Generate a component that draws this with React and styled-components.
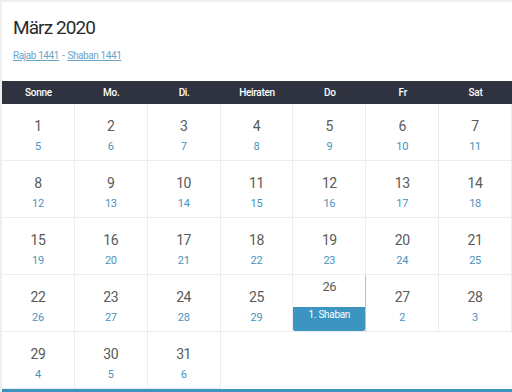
import React from "react";
import styled, { createGlobalStyle } from "styled-components";

const GlobalStyle = createGlobalStyle`
  html, body {
    margin: 0;
    padding: 0;
    background: #ffffff;
    font-family: Roboto, "Liberation Sans", Arial, sans-serif;
  }
`;

const weekdays = ["Sonne", "Mo.", "Di.", "Heiraten", "Do", "Fr", "Sat"];

// gregorian day, hijri day, optional month label
const days = [
  [1, 5], [2, 6], [3, 7], [4, 8], [5, 9], [6, 10], [7, 11],
  [8, 12], [9, 13], [10, 14], [11, 15], [12, 16], [13, 17], [14, 18],
  [15, 19], [16, 20], [17, 21], [18, 22], [19, 23], [20, 24], [21, 25],
  [22, 26], [23, 27], [24, 28], [25, 29], [26, 1, "1. Shaban"], [27, 2], [28, 3],
  [29, 4], [30, 5], [31, 6],
];

function App() {
  return (
    <>
      <GlobalStyle />
      <Page>
        <Sheet>
          <Title>März 2020</Title>
          <Months>
            <MonthLink href="#">Rajab 1441</MonthLink>
            <Dash>-</Dash>
            <MonthLink href="#">Shaban 1441</MonthLink>
          </Months>
          <HeadRow>
            {weekdays.map((d) => (
              <HeadCell key={d}>{d}</HeadCell>
            ))}
          </HeadRow>
          <Grid>
            {days.map(([g, h, label]) =>
              label ? (
                <MarkedCell key={g}>
                  <MarkedDay>{g}</MarkedDay>
                  <MonthBand>{label}</MonthBand>
                </MarkedCell>
              ) : (
                <Cell key={g}>
                  <Day>{g}</Day>
                  <Hijri>{h}</Hijri>
                </Cell>
              )
            )}
          </Grid>
          <BottomBar />
        </Sheet>
      </Page>
    </>
  );
}

const Page = styled.div`
  background: #efefef;
  padding: 2px 0 0 2px;
  height: 392px;
  box-sizing: border-box;
  overflow: hidden;
`;

const Sheet = styled.div`
  background: #ffffff;
  display: flex;
  flex-direction: column;
`;

const Title = styled.h1`
  margin: 0;
  padding: 13px 0 0 11px;
  font-size: 19px;
  line-height: 26px;
  font-weight: 400;
  letter-spacing: -0.9px;
  color: #2b2b2b;
`;

const Months = styled.div`
  padding: 8px 0 0 11px;
  height: 32px;
  font-size: 10px;
  line-height: 14px;
  letter-spacing: -0.4px;
  color: #6aa5c8;
`;

const MonthLink = styled.a`
  color: #6aa5c8;
  text-decoration: underline;
`;

const Dash = styled.span`
  margin: 0 3px;
`;

const HeadRow = styled.div`
  display: grid;
  grid-template-columns: repeat(7, 1fr);
  height: 23px;
  background: #2e333f;
`;

const HeadCell = styled.div`
  display: flex;
  align-items: center;
  justify-content: center;
  color: #ffffff;
  font-size: 10px;
  font-weight: 500;
  letter-spacing: -0.3px;
`;

const Grid = styled.div`
  display: grid;
  grid-template-columns: repeat(7, 1fr);
  grid-auto-rows: 57px;
`;

const Cell = styled.div`
  display: flex;
  flex-direction: column;
  align-items: center;
  padding-top: 12px;
  box-sizing: border-box;
  border-right: 1px solid #ededed;
  border-bottom: 1px solid #ededed;
`;

const Day = styled.div`
  font-size: 14px;
  line-height: 20px;
  letter-spacing: -0.4px;
  color: #5a5a5a;
`;

const Hijri = styled.div`
  margin-top: 1px;
  font-size: 11px;
  line-height: 20px;
  letter-spacing: -0.3px;
  color: #4a93bd;
`;

const MarkedCell = styled.div`
  display: flex;
  flex-direction: column;
  align-items: stretch;
  box-sizing: border-box;
  border-right: 1px solid #9ccbe0;
  border-bottom: 1px solid #ededed;
`;

const MarkedDay = styled.div`
  text-align: center;
  padding-top: 4px;
  font-size: 13px;
  line-height: 16px;
  letter-spacing: -0.4px;
  color: #5a5a5a;
`;

const MonthBand = styled.div`
  margin-top: auto;
  height: 24px;
  background: #3b95c0;
  color: #ffffff;
  font-size: 10px;
  line-height: 16px;
  letter-spacing: -0.3px;
  text-align: center;
  border-radius: 0 0 2px 2px;
`;

const BottomBar = styled.div`
  height: 3px;
  background: #3b95c0;
`;

export default App;
